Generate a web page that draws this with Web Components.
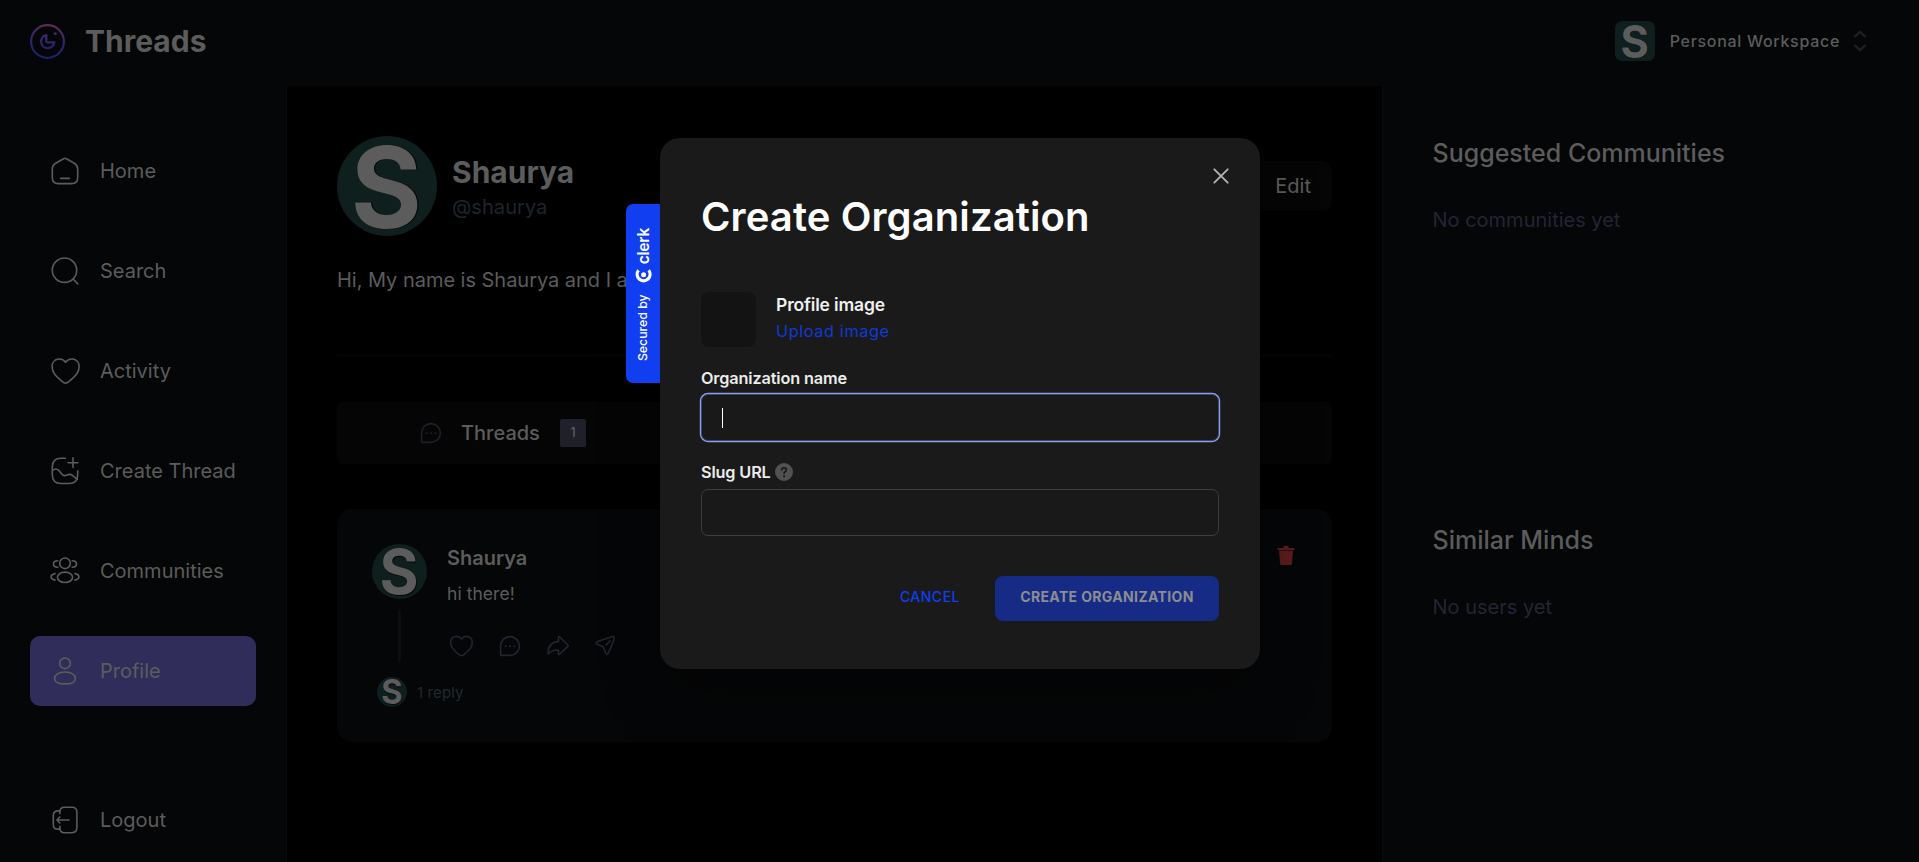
<!DOCTYPE html>
<html lang="en">
<head>
<meta charset="utf-8">
<title>Threads</title>
<style>
html,body{margin:0;height:100%;background:#000;overflow:hidden}
body{font-family:Inter,"Liberation Sans",sans-serif;color:#5c5c5c;font-size:20px}
</style>
</head>
<body>
<threads-app></threads-app>
<script>
const define = (name, css, html) => customElements.define(name, class extends HTMLElement {
  connectedCallback() {
    if (this.shadowRoot) return;
    const root = this.attachShadow({mode: 'open'});
    const t = document.createElement('template');
    t.innerHTML = `<style>*{box-sizing:border-box}:host{box-sizing:border-box}${css}</style>` + (typeof html === 'function' ? html(this) : html);
    root.append(t.content.cloneNode(true));
  }
});

const ICONS = {
  home: '<path d="M13.6 2.7Q15 1.9 16.4 2.7L24.3 7.3Q27.7 9.3 27.7 13V21.5Q27.7 27.6 21.6 27.6H8.4Q2.3 27.6 2.3 21.5V13Q2.3 9.3 5.7 7.3ZM10.7 22.4H19.3"/>',
  search: '<circle cx="14.5" cy="14.2" r="12.2"/><path d="M23.2 23L27.8 28"/>',
  heart: '<path d="M15.6 6.2C13.6 3.3 10.8 2.8 8.5 3C4.6 3.4 2.1 6.6 2.1 10.7C2.1 16.4 5.2 19.5 12.4 25.7Q15.6 28.6 18.8 25.7C26 19.5 29.1 16.4 29.1 10.7C29.1 6.6 26.6 3.4 22.7 3C20.4 2.8 17.6 3.3 15.6 6.2Z"/>',
  create: '<path d="M15.5 2.3H11Q2.3 2.3 2.3 11V18.5Q2.3 27.5 11 27.5H19Q27.7 27.5 27.7 18.5V14.7M23 1.8V11.5M18.1 6.7H27.9M2.6 14.5Q5.2 12 7.8 13.7C10.3 15.5 12 19.8 14.6 19.6C17 19.4 18.9 17.4 21.5 18.8C24 20.2 25 22.3 27.4 23.2"/>',
  people: '<circle cx="15" cy="7.3" r="5.3"/><ellipse cx="15" cy="21.3" rx="7.6" ry="5.2"/><path d="M7.8 4.7Q3.5 4.7 3.5 8Q3.5 11.3 7.8 11.3M22.2 4.7Q26.5 4.7 26.5 8Q26.5 11.3 22.2 11.3M5 17.6Q1 18.5 1 20.8Q1 23.2 5 24.1M25 17.6Q29 18.5 29 20.8Q29 23.2 25 24.1"/>',
  user: '<circle cx="15" cy="7.3" r="5.3"/><path d="M15 16C8.5 16 4.6 19 4.6 22.4C4.6 27.2 9.5 27.9 15 27.9S25.4 27.2 25.4 22.4C25.4 19 21.5 16 15 16Z"/>',
  logout: '<path d="M9.9 8.8V7Q9.9 2.3 14.5 2.3H22Q26.9 2.3 26.9 7.2V22.8Q26.9 27.7 22 27.7H14.5Q9.9 27.7 9.9 23V21.2M9.9 5.9H8Q3.3 5.9 3.3 10.6V19.4Q3.3 24.1 8 24.1H9.9M19 15H7.2M9.8 12L6.9 15L9.8 18"/>',
  comment: '<path d="M5.6 23.4V15A9.4 9.4 0 1 1 15 24.4H6.6Q5.6 24.4 5.6 23.4Z"/><path stroke-width="2" d="M10.6 15.2H10.7M15 15.2H15.1M19.3 15.2H19.4"/>',
  share: '<path d="M16.2 5.6Q15.4 5.2 15.4 6.3V10.4Q5.3 11.4 5.1 21.5Q5 23.8 6.4 22Q9.4 18.9 15.4 19V22.9Q15.4 24 16.3 23.3L24.7 15.7Q25.6 14.7 24.7 13.8Z"/>',
  send: '<path d="M22.7 5.5L7.4 10.4Q5.2 11.6 7 13.2L13 15.7L15.6 21.8Q17 24.4 18.4 22Q24 10 24.1 7.3Q24.2 5.3 22.7 5.5ZM20.3 9.7L16 14"/>',
};
define('ui-icon', ':host{display:block;width:30px;height:30px}svg{display:block;width:100%;height:100%}',
  el => `<svg viewBox="0 0 30 30" fill="none" stroke="currentColor" stroke-width="${el.getAttribute('weight') || 1.6}" stroke-linecap="round" stroke-linejoin="round">${ICONS[el.getAttribute('name')]}</svg>`);

define('user-avatar',
  ':host{display:block;flex:none;width:var(--size,55px);height:var(--size,55px);border-radius:var(--round,50%);background:#0f1f1e}svg{display:block;overflow:visible}',
  '<svg viewBox="0 0 100 100" width="100%" height="100%"><g font-family="Inter,sans-serif" font-weight="700" font-size="112" text-anchor="middle"><text fill="#030808" transform="translate(50.6 92.4) scale(.97 1)">S</text><text fill="#5c5c5c" transform="translate(49.4 91.6) scale(.97 1)">S</text></g></svg>');

define('top-bar', `
:host{display:flex;height:86px;align-items:center;justify-content:space-between;padding:0 51px 4px 29px;background:#050607}
.brand,.org{display:flex;align-items:center}
.brand{gap:19px}.brand svg{display:block}
b{font-size:30px;letter-spacing:0}
.org{font-size:16px;font-weight:500;letter-spacing:.7px}
.org span{margin-left:15px}.org svg{margin-left:12px}
`, `<div class="brand"><svg width="37" height="37" viewBox="0 0 37 37" fill="none" stroke="url(#g)" stroke-linecap="round" stroke-linejoin="round"><defs><linearGradient id="g" gradientUnits="userSpaceOnUse" x1="22" y1="0" x2="16" y2="37"><stop stop-color="#632c57"/><stop offset=".5" stop-color="#30246b"/><stop offset="1" stop-color="#142268"/></linearGradient></defs><circle cx="18.5" cy="18.5" r="16.4" stroke-width="2.2"/><path stroke-width="2.3" d="M17.3 12.1A6.6 6.6 0 1 0 25.3 19.3L18.3 19.3Q17.3 19.2 17.3 18.2Z"/><circle cx="26.2" cy="10.6" r="1.6" fill="#3c2664" stroke="none"/></svg><b>Threads</b></div>
<div class="org"><user-avatar style="--size:40px;--round:7px"></user-avatar><span>Personal Workspace</span><svg width="16" height="22" viewBox="0 0 16 22" fill="none" stroke="#1f1f20" stroke-width="2.4" stroke-linecap="round" stroke-linejoin="round"><path d="M3.2 6.4L8 1.8L12.8 6.4M3.2 15.6L8 20.2L12.8 15.6"/></svg></div>`);

define('nav-item', `
:host{display:flex;gap:20px;align-items:center;height:70px;padding:0 20px;border-radius:10px}
:host([active]){background:#312d5b}
`, el => `<ui-icon name="${el.getAttribute('icon')}"></ui-icon><slot></slot>`);

define('side-nav', `
:host{display:flex;flex-direction:column;justify-content:space-between;width:287px;flex:none;padding:50px 30px 7px 30px;background:#050607;border-right:1px solid #0b0b0c}
nav{display:flex;flex-direction:column;gap:30px}
`, `<nav><nav-item icon="home">Home</nav-item><nav-item icon="search">Search</nav-item><nav-item icon="heart">Activity</nav-item><nav-item icon="create">Create Thread</nav-item><nav-item icon="people">Communities</nav-item><nav-item icon="user" active>Profile</nav-item></nav><nav-item icon="logout">Logout</nav-item>`);

define('profile-header', `
:host{display:block;border-bottom:3px solid #040405;height:221px}
.row{display:flex;align-items:center;gap:15px}
h1{margin:0;font-size:30px;line-height:40px;letter-spacing:0}
.who{flex:1;padding-top:2px}
.handle{color:#1f252b;line-height:30px;letter-spacing:.05px}
.edit{height:50px;line-height:50px;border-radius:10px;background:#050506;padding:0 21px 0 50px}
p{margin:30px 0 0;line-height:28px;letter-spacing:-.03px}
`, `<div class="row"><user-avatar style="--size:100px"></user-avatar><div class="who"><h1>Shaurya</h1><div class="handle">@shaurya</div></div><div class="edit">Edit</div></div><p>Hi, My name is Shaurya and I a</p>`);

define('tab-bar', `
:host{display:flex;height:62px;margin-top:45px;border-radius:6px;background:#050505}
.tab{display:flex;flex:0 0 33.33%;align-items:center;padding-left:79px;font-weight:500}
ui-icon{color:#1f1f2b;width:30px;height:30px}
span{margin-left:15px}
i{font-style:normal;font-size:13px;font-weight:500;width:26px;height:28px;line-height:27px;text-align:center;background:#20202a;border-radius:2px;margin-left:20px}
`, `<div class="tab"><ui-icon name="comment"></ui-icon><span>Threads</span><i>1</i></div>`);

define('thread-card', `
:host{display:flex;height:233px;margin-top:45px;border-radius:15px;background:#050607;padding:35px 35px 0;align-items:flex-start}
.rail{width:55px;display:flex;flex-direction:column;align-items:center}
.line{width:3px;height:53px;border-radius:2px;background:#0c0d0f;margin:10px 0 15px}
.reply{display:flex;align-items:center;gap:10px;align-self:flex-start;margin-left:5px;font-size:15px;color:#22292f;white-space:nowrap;letter-spacing:.12px}
.reply span{line-height:28px;padding-top:2px}
.body{flex:1;margin-left:20px}
h2{margin:0;font-size:20px;font-weight:600;line-height:28px}
p{margin:8px 0 0;font-size:17.5px;line-height:28px;letter-spacing:.05px}
.acts{display:flex;margin-top:23px;color:#242433;align-items:center}
.acts ui-icon{margin-right:17.5px}
.acts .h{width:24px;height:24px;margin:0 22px 0 2px}
.bin{margin-right:2px;margin-top:2px;display:block}
`, `<div class="rail"><user-avatar></user-avatar><div class="line"></div><div class="reply"><user-avatar style="--size:30px"></user-avatar><span>1 reply</span></div></div>
<div class="body"><h2>Shaurya</h2><p>hi there!</p><div class="acts"><ui-icon class="h" name="heart" weight="1.9"></ui-icon><ui-icon name="comment"></ui-icon><ui-icon name="share"></ui-icon><ui-icon name="send"></ui-icon></div></div>
<svg class="bin" width="18" height="20" viewBox="0 0 18 20" fill="#5a1c1c"><path d="M6.5 0H11.5V2H17.5V4H.5V2H6.5ZM2 4.6H16L15 17.5Q14.8 19 13.4 19H4.6Q3.2 19 3 17.5Z"/></svg>`);

define('suggest-panel', `
:host{display:block;height:387px}
h3{margin:0;font-size:25px;line-height:34px;font-weight:500}
p{margin:36px 0 0;line-height:28px;color:#242436}
`, '<h3><slot name="title"></slot></h3><p><slot></slot></p>');

define('right-bar', `:host{display:block;width:537px;flex:none;background:#050607;border-left:1px solid #0b0b0c;padding:50px 0 0 49.5px}`,
 `<suggest-panel><span slot="title">Suggested Communities</span>No communities yet</suggest-panel><suggest-panel><span slot="title">Similar Minds</span>No users yet</suggest-panel>`);

define('text-field', `
:host{display:block}
label{display:flex;align-items:center;height:20px;font-size:16.25px;font-weight:600;color:#ececec;gap:4px;letter-spacing:-.14px}
.box{height:47px;margin-top:7px;border:1px solid #3f3f3f;border-radius:7px;background:#191919;display:flex;align-items:center;padding-left:20px}
:host([focused]) .box{border-color:#3f4663;box-shadow:0 0 0 1.2px #8a9ff0;margin-top:6px}
.caret{width:1px;height:20px;background:#fff}
`, el => `<label><slot></slot></label><div class="box">${el.hasAttribute('focused') ? '<div class="caret"></div>' : ''}</div>`);

define('clerk-badge', `
:host{position:absolute;left:-34px;top:66px;width:34px;height:179px;background:#103ef0;border-radius:7px 0 0 7px;display:flex;align-items:center;justify-content:center;color:#fff}
div{display:flex;flex:none;align-items:center;transform:translate(1px,1px) rotate(-90deg);white-space:nowrap}
.by{font-size:12.3px;font-weight:500;transform:translateY(-1px)}
svg{margin:0 4px 0 11px}
b{font:600 15.6px/1 Inter,sans-serif;letter-spacing:-.25px}
`, `<div><span class="by">Secured by</span><svg width="15" height="17" viewBox="0 0 15 17" fill="none" stroke="#fff"><path stroke-width="3.3" d="M12.7 3.5A6.4 6.4 0 1 0 12.7 13.5"/><circle cx="8.3" cy="8.5" r="2.5" fill="#fff" stroke="none"/><path stroke="#103ef0" stroke-width="1" d="M9.8 13.4L13.5 10M9.8 3.6L13.5 7"/></svg><b>clerk</b></div>`);

define('org-modal', `
:host{position:absolute;left:660px;top:138px;width:600px;height:531px;background:#1a1a1a;border-radius:20px;padding:54px 41px 0;display:block;color:#fff;box-shadow:0 30px 60px rgba(0,0,0,.3)}
.x{position:absolute;right:31px;top:30px}
h1{margin:0;font-size:40px;font-weight:600;line-height:50px;letter-spacing:.1px}
.img{display:flex;gap:20px;margin-top:50px;height:55px}
.sq{width:55px;height:55px;border-radius:8px;background:#131313}
.t{font-size:17.5px;font-weight:600;line-height:26px;letter-spacing:-.16px;color:#f0f0f0}
.u{font-size:16.25px;line-height:26px;letter-spacing:.62px;color:#1239d6}
text-field{margin-top:21px}
text-field+text-field{margin-top:21px}
.q{display:block}
.acts{display:flex;justify-content:flex-end;align-items:center;margin-top:40px;font-size:14px;letter-spacing:.5px;font-weight:500;color:#103ef0}
.go{margin-left:35px;width:224px;height:45px;line-height:42px;border-radius:8px;background:#152b86;color:#8d8d90;text-align:center;font-weight:700;letter-spacing:.36px}
.c{line-height:42px;height:45px}
`, `<clerk-badge></clerk-badge>
<svg class="x" width="16" height="16" viewBox="0 0 16 16" stroke="#b5b5b5" stroke-width="1.8" stroke-linecap="round"><path d="M1.3 1.3L14.7 14.7M14.7 1.3L1.3 14.7"/></svg>
<h1>Create Organization</h1>
<div class="img"><div class="sq"></div><div><div class="t">Profile image</div><div class="u">Upload image</div></div></div>
<text-field focused>Organization name</text-field>
<text-field>Slug URL<svg class="q" width="18" height="18" viewBox="0 0 18 18"><circle cx="9" cy="9" r="9" fill="#515151"/><path d="M6.7 6.9Q6.9 4.8 9.1 4.8T11.4 6.8Q11.4 8 10.1 8.7Q9.1 9.3 9.1 10.4" fill="none" stroke="#1a1a1a" stroke-width="1.7" stroke-linecap="round"/><circle cx="9.1" cy="13.3" r="1.1" fill="#1a1a1a"/></svg></text-field>
<div class="acts"><div class="c">CANCEL</div><div class="go">CREATE ORGANIZATION</div></div>`);

define('threads-app', `
:host{display:flex;flex-direction:column;width:100%;height:862px;position:relative;overflow:hidden}
.cols{display:flex;flex:1;min-height:0}
main{flex:1;padding:50px 50px 0 50px}
`, `<top-bar></top-bar><div class="cols"><side-nav></side-nav><main><profile-header></profile-header><tab-bar></tab-bar><thread-card></thread-card></main><right-bar></right-bar></div><org-modal></org-modal>`);
</script>
</body>
</html>
